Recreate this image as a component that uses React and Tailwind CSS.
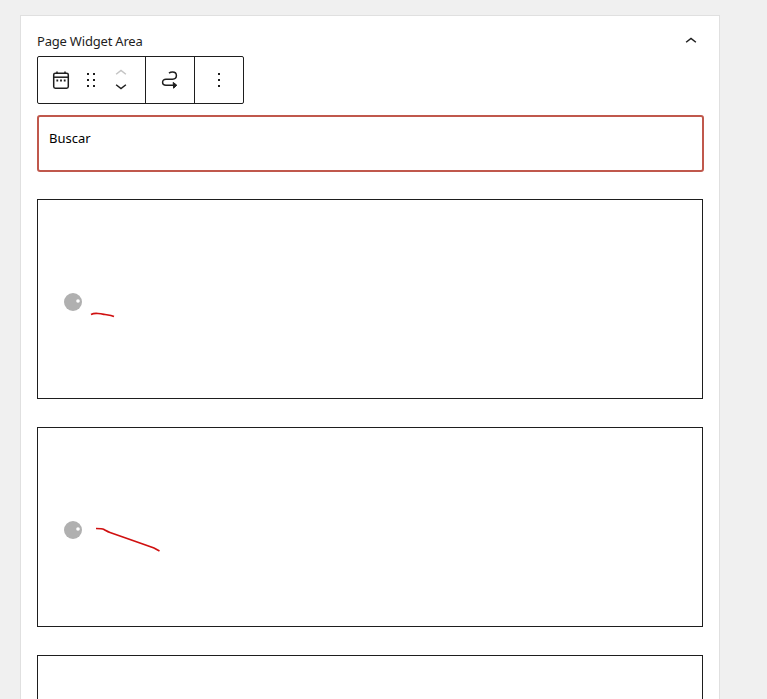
import React from "react";

const font = { fontFamily: '"Noto Sans", sans-serif' };

// Icons drawn to follow the block editor toolbar
const CalendarIcon = () => (
  <svg width="24" height="24" viewBox="0 0 24 24" fill="none" stroke="#1e1e1e">
    <rect x="4.7" y="5.2" width="14.6" height="15" rx="1.6" strokeWidth="1.5" />
    <path d="M4.7 9.2h14.6" strokeWidth="1.5" />
    <path d="M8 3.4v2.6M16 3.4v2.6" strokeWidth="1.5" />
    <path d="M7.4 12.5h1.8M11.1 12.5h1.8M14.8 12.5h1.8" strokeWidth="1.8" />
  </svg>
);

const DragIcon = () => (
  <svg width="24" height="24" viewBox="0 0 24 24" fill="#1e1e1e">
    <path d="M8 7h2V5H8v2zm0 6h2v-2H8v2zm0 6h2v-2H8v2zm6-14v2h2V5h-2zm0 8h2v-2h-2v2zm0 6h2v-2h-2v2z" />
  </svg>
);

const Chevron = ({ up, className }) => (
  <svg width="18" height="18" viewBox="0 0 24 24" fill="none" stroke="currentColor" strokeWidth="2" className={className}>
    <path d={up ? "M5.5 15l6.5-5 6.5 5" : "M5.5 9l6.5 5 6.5-5"} />
  </svg>
);

const LoopIcon = () => (
  <svg width="24" height="24" viewBox="0 0 24 24" fill="none" stroke="#1e1e1e" strokeWidth="1.5">
    <path d="M11 5.2c1-.8 2.2-1.2 3.5-1.2 2.3 0 3.9 1.6 3.9 3.6s-1.6 3.6-3.9 3.6H8c-2 0-3.4 1.3-3.4 3s1.4 3 3.4 3h9.6" />
    <path d="M15.2 14.4l3.6 2.8-3.2 3z" fill="#1e1e1e" strokeWidth="1" />
  </svg>
);

const MoreIcon = () => (
  <svg width="24" height="24" viewBox="0 0 24 24" fill="#1e1e1e">
    <path d="M13 19h-2v-2h2v2zm0-6h-2v-2h2v2zm0-6h-2V5h2v2z" />
  </svg>
);

const Spinner = () => (
  <svg width="18" height="18" viewBox="0 0 18 18" className="shrink-0">
    <circle cx="9" cy="9" r="9" fill="#b0b0b0" />
    <circle cx="14" cy="8" r="1.8" fill="#fff" />
  </svg>
);

const LoadingBox = ({ children }) => (
  <div className="h-[200px] shrink-0 border border-[#1e1e1e] bg-white flex items-center pl-[26px] pt-[6px]">
    <div className="flex items-start h-[18px]">
      <Spinner />
      {children}
    </div>
  </div>
);

export default function App() {
  return (
    <div className="h-[699px] overflow-hidden bg-[#f0f0f0]" style={font}>
      <section className="ml-5 mt-[15px] w-[700px] h-[800px] bg-white border border-[#e0e0e0] px-4 pt-[15px]">
        <div className="flex items-center justify-between h-[20px] pr-[2px]">
          <h2 className="text-[13px] leading-5 tracking-[-0.2px] text-[#1e1e1e]">Page Widget Area</h2>
          <Chevron up className="text-[#1e1e1e] -mt-[2px] mr-[1px]" />
        </div>

        {/* Block toolbar */}
        <div className="mt-[5px] flex w-[207px] h-[48px] border border-[#1e1e1e] rounded-[2px] bg-white">
          <div className="w-[108px] flex items-center border-r border-[#1e1e1e] pl-[11px]">
            <CalendarIcon />
            <div className="ml-[6px]">
              <DragIcon />
            </div>
            <div className="ml-[9px] flex flex-col">
              <Chevron up className="text-[#c4c4c4] -mb-[2px] -mt-[1px]" />
              <Chevron className="text-[#1e1e1e] -mt-[1px]" />
            </div>
          </div>
          <div className="w-[49px] flex items-center justify-center border-r border-[#1e1e1e]">
            <LoopIcon />
          </div>
          <div className="flex-1 flex items-center justify-center">
            <MoreIcon />
          </div>
        </div>

        {/* Selected block */}
        <div className="mt-[11px] w-[667px] h-[57px] border-2 border-[#c0584c] rounded-[3px] px-[10px] pt-[11px] text-[13px] leading-5 text-black">
          Buscar
        </div>

        <div className="mt-[27px] flex flex-col gap-[28px]">
          <LoadingBox>
            <svg width="26" height="8" viewBox="0 0 26 8" fill="none" stroke="#d01010" strokeWidth="1.7" className="ml-[8px] mt-[17.5px]">
              <path d="M1 3.5c2-1 4-1.3 7-1s4 .5 7 1 6 .8 9 2" />
            </svg>
          </LoadingBox>
          <LoadingBox>
            <svg width="66" height="28" viewBox="0 0 66 28" fill="none" stroke="#d01010" strokeWidth="1.7" className="ml-[13px] mt-[5px]">
              <path d="M1 2.5c3 0 6 0 8 1s3 2 6 3l20 7 17 6 7 2.5 5.5 3" />
            </svg>
          </LoadingBox>
          <div className="h-[200px] shrink-0 border border-[#1e1e1e] bg-white" />
        </div>
      </section>
    </div>
  );
}
